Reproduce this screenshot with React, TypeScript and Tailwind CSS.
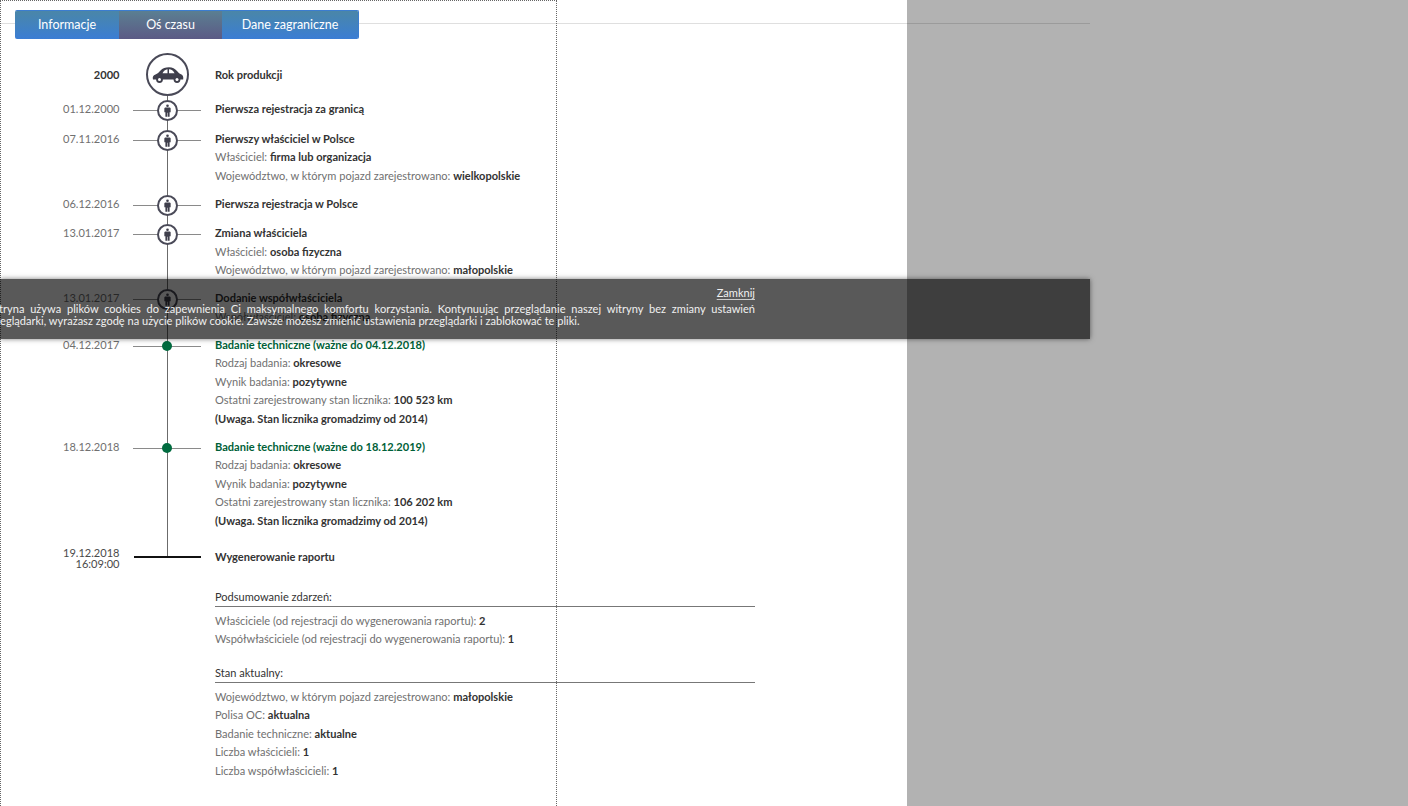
import React from "react";

const Person = () => (
  <svg width="7" height="13" viewBox="0 0 8 14" fill="#3f3f4c">
    <circle cx="4" cy="1.600" r="1.500" />
    <path d="M1.200 3.600h5.600l.8.8v4.600H6.400V14H4.300V9.500h-.6V14H1.600V9H.4V4.400z" />
  </svg>
);

const Car = () => (
  <svg width="32" height="16" viewBox="0 0 32 16" fill="#3f3f4c">
    <path d="M1 12.500C.3 10 1 8.200 3.500 7.400 5.500 6.800 6.800 5.300 8.500 3.500 10.500 1.300 13.500.2 17 .2c3.500 0 6 1.300 8 3.800 1.200 1.500 2.500 2.600 4 3.200 2 .9 2.600 2.600 2.200 5.300H1z" />
    <path fill="#fff" d="M10.500 6.300c1-2.300 2.800-3.700 5-4V6.300zM17 2.200c2.400 0 4.300 1.300 5.600 4.100H17z" />
    <circle cx="7.500" cy="12.500" r="3.400" />
    <circle cx="7.500" cy="12.500" r="1.500" fill="#fff" />
    <circle cx="25" cy="12.500" r="3.400" />
    <circle cx="25" cy="12.500" r="1.500" fill="#fff" />
  </svg>
);

type Item = { date: string; node: "person" | "dot"; title: string; green?: boolean; lines?: [string, string][] };

const items: Item[] = [
  { date: "01.12.2000", node: "person", title: "Pierwsza rejestracja za granicą" },
  { date: "07.11.2016", node: "person", title: "Pierwszy właściciel w Polsce", lines: [["Właściciel: ", "firma lub organizacja"], ["Województwo, w którym pojazd zarejestrowano: ", "wielkopolskie"]] },
  { date: "06.12.2016", node: "person", title: "Pierwsza rejestracja w Polsce" },
  { date: "13.01.2017", node: "person", title: "Zmiana właściciela", lines: [["Właściciel: ", "osoba fizyczna"], ["Województwo, w którym pojazd zarejestrowano: ", "małopolskie"]] },
  { date: "13.01.2017", node: "person", title: "Dodanie współwłaściciela", lines: [["Współwłaściciel: ", "osoba fizyczna"]] },
  { date: "04.12.2017", node: "dot", green: true, title: "Badanie techniczne (ważne do 04.12.2018)", lines: [["Rodzaj badania: ", "okresowe"], ["Wynik badania: ", "pozytywne"], ["Ostatni zarejestrowany stan licznika: ", "100 523 km"], ["", "(Uwaga. Stan licznika gromadzimy od 2014)"]] },
  { date: "18.12.2018", node: "dot", green: true, title: "Badanie techniczne (ważne do 18.12.2019)", lines: [["Rodzaj badania: ", "okresowe"], ["Wynik badania: ", "pozytywne"], ["Ostatni zarejestrowany stan licznika: ", "106 202 km"], ["", "(Uwaga. Stan licznika gromadzimy od 2014)"]] },
];

const Line = ({ a, b }: { a: string; b: string }) => (
  <p className="h-[18.5px] leading-[18.5px] text-[#707070]">
    {a}
    <b className="font-bold text-[#333]">{b}</b>
  </p>
);

const Row = ({ it, h }: { it: Item; h: string }) => (
  <div className={`flex ${h}`}>
    <div className="w-[119.5px] shrink-0 text-right h-[18.5px] leading-[18.5px] text-[#707070]">{it.date}</div>
    <div className="relative w-[95.5px] shrink-0">
      <div className="absolute left-[13.5px] top-[10px] w-[68px] h-px bg-[#8a8a8a]" />
      {it.node === "person" && (
        <div className="absolute left-[37.5px] top-0 w-[21px] h-[21px] rounded-full border-2 border-[#4a4a58] bg-white flex items-center justify-center">
          <Person />
        </div>
      )}
      {it.node === "dot" && <div className="absolute left-[42.5px] top-[5px] w-[10px] h-[10px] rounded-full bg-[#006b3f]" />}
    </div>
    <div>
      <p className={`h-[18.5px] leading-[18.5px] font-bold ${it.green ? "text-[#005f38]" : "text-[#333]"}`}>{it.title}</p>
      {it.lines?.map(([a, b]) => <Line key={b} a={a} b={b} />)}
    </div>
  </div>
);

export default function App() {
  return (
    <div className="relative h-[806px] w-[1408px] overflow-hidden bg-white text-[11.05px] [font-family:Lato,'Noto_Sans',sans-serif]">
      <div className="w-[1090px]">
        <div className="border-b border-[#dfdfdf] h-[24px] pl-[15px] pt-[10px]">
          <div className="flex h-[29px] w-[344px] rounded-[2px] overflow-hidden text-[12.5px] text-white border-r border-t border-[#3b7dd0]">
            <div className="w-[104px] flex items-center justify-center bg-gradient-to-b from-[#4a86a8] to-[#3b7dd4]">Informacje</div>
            <div className="w-[103px] flex items-center justify-center bg-gradient-to-b from-[#5a7f92] to-[#5b5a85]">Oś czasu</div>
            <div className="flex-1 flex items-center justify-center bg-gradient-to-b from-[#4a86a8] to-[#3b7dd4]">Dane zagraniczne</div>
          </div>
        </div>
        <div className="relative pt-[29px]">
          <div className="absolute left-[167px] top-[72px] w-px h-[460px] bg-[#6b6b6b]" />
          <div className="flex h-[43px] items-center">
            <div className="w-[119.5px] shrink-0 text-right font-bold text-[#333] pt-px">2000</div>
            <div className="w-[95.5px] shrink-0 pl-[26.5px]">
              <div className="w-[43px] h-[43px] rounded-full border-2 border-[#4a4a58] bg-white flex items-center justify-center"><Car /></div>
            </div>
            <div className="font-bold text-[#333] pt-px">Rok produkcji</div>
          </div>
          <div className="relative mt-[3.75px]">
            <Row it={items[0]} h="h-[30px]" />
            <Row it={items[1]} h="h-[65px]" />
            <Row it={items[2]} h="h-[29.5px]" />
            <Row it={items[3]} h="h-[65px]" />
            <Row it={items[4]} h="h-[46.5px]" />
            <Row it={items[5]} h="h-[102px]" />
            <Row it={items[6]} h="h-[102px]" />
          </div>
          <div className="flex h-[48.25px] pt-[7px]">
            <div className="w-[119.5px] shrink-0 text-right leading-[11px] text-[#4a4a4a]">19.12.2018<br />16:09:00</div>
            <div className="w-[95.5px] shrink-0 relative">
              <div className="absolute left-[14.5px] top-[9px] w-[67px] h-[2px] bg-[#111]" />
            </div>
            <div className="font-bold text-[#333] leading-[18px] pt-[1.5px]">Wygenerowanie raportu</div>
          </div>
          <div className="ml-[215px] w-[540px]">
            <div className="border-b border-[#777] h-[19px] leading-[18px] text-[#333]">Podsumowanie zdarzeń:</div>
            <div className="pt-[4.75px]">
              <Line a="Właściciele (od rejestracji do wygenerowania raportu): " b="2" />
              <Line a="Współwłaściciele (od rejestracji do wygenerowania raportu): " b="1" />
            </div>
            <div className="border-b border-[#777] h-[19px] leading-[18px] text-[#333] mt-[15.25px]">Stan aktualny:</div>
            <div className="pt-[4.75px]">
              <Line a="Województwo, w którym pojazd zarejestrowano: " b="małopolskie" />
              <Line a="Polisa OC: " b="aktualna" />
              <Line a="Badanie techniczne: " b="aktualne" />
              <Line a="Liczba właścicieli: " b="1" />
              <Line a="Liczba współwłaścicieli: " b="1" />
            </div>
          </div>
        </div>
      </div>

      <div className="absolute left-0 top-0 w-[557px] h-[830px] border border-dotted border-[#666] pointer-events-none" />

      <div className="absolute left-0 top-[279px] w-[1090px] h-[60px] bg-[rgba(0,0,0,0.65)] shadow-[0_0_5px_rgba(0,0,0,0.5)] text-[#f0f0f0]">
        <div className="absolute right-[335px] top-[6px] underline underline-offset-2 decoration-[#ccc]">Zamknij</div>
        <p className="absolute left-[-15px] top-[24px] w-[770px] leading-[12px] text-justify">Witryna używa plików cookies do zapewnienia Ci maksymalnego komfortu korzystania. Kontynuując przeglądanie naszej witryny bez zmiany ustawień przeglądarki, wyrażasz zgodę na użycie plików cookie. Zawsze możesz zmienić ustawienia przeglądarki i zablokować te pliki.</p>
      </div>

      <div className="absolute left-[907px] top-0 right-0 bottom-0 bg-[rgba(0,0,0,0.3)]" />
    </div>
  );
}
